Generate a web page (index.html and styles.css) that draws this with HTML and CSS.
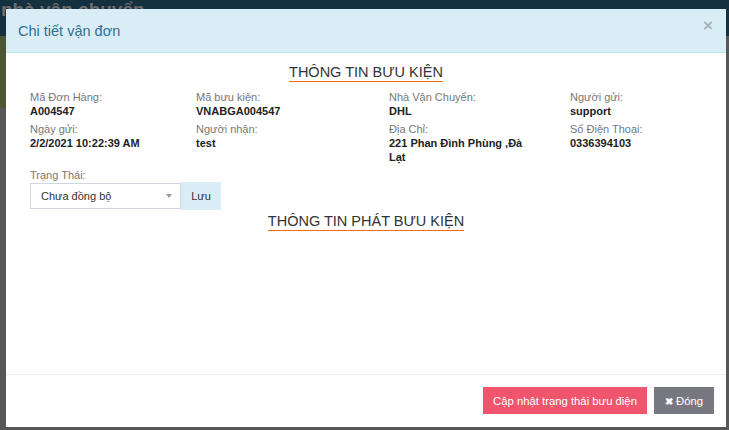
FILE: index.html
```html
<!DOCTYPE html>
<html lang="vi">
<head>
    <meta charset="UTF-8">
    <meta name="viewport" content="width=device-width, initial-scale=1.0">
    <title>Chi tiết vận đơn</title>
    <link rel="stylesheet" href="styles.css">
</head>
<body>

    <div class="page">
        <div class="topbar"><span class="page-title">nhà vận chuyển</span></div>
        <div class="page-body">
            <div class="side-block"></div>
        </div>
    </div>

    <div class="backdrop">
        <div class="dialog">
            <div class="dialog-header">
                <h4 class="dialog-title">Chi tiết vận đơn</h4>
                <button class="close">&times;</button>
            </div>

            <div class="dialog-body">
                <div class="section-head"><span>THÔNG TIN BƯU KIỆN</span></div>

                <div class="info-grid">
                    <div class="item">
                        <div class="label">Mã Đơn Hàng:</div>
                        <div class="value">A004547</div>
                    </div>
                    <div class="item">
                        <div class="label">Mã bưu kiện:</div>
                        <div class="value">VNABGA004547</div>
                    </div>
                    <div class="item">
                        <div class="label">Nhà Vận Chuyển:</div>
                        <div class="value">DHL</div>
                    </div>
                    <div class="item">
                        <div class="label">Người gửi:</div>
                        <div class="value">support</div>
                    </div>
                    <div class="item">
                        <div class="label">Ngày gửi:</div>
                        <div class="value">2/2/2021 10:22:39 AM</div>
                    </div>
                    <div class="item">
                        <div class="label">Người nhận:</div>
                        <div class="value">test</div>
                    </div>
                    <div class="item">
                        <div class="label">Địa Chỉ:</div>
                        <div class="value address">221 Phan Đình Phùng ,Đà Lạt</div>
                    </div>
                    <div class="item">
                        <div class="label">Số Điện Thoại:</div>
                        <div class="value">0336394103</div>
                    </div>
                </div>

                <div class="status">
                    <div class="label">Trạng Thái:</div>
                    <div class="status-row">
                        <div class="select">
                            <span>Chưa đồng bộ</span>
                            <span class="caret"></span>
                        </div>
                        <button class="save-button">Lưu</button>
                    </div>
                </div>

                <div class="section-head second"><span>THÔNG TIN PHÁT BƯU KIỆN</span></div>
            </div>

            <div class="dialog-footer">
                <button class="btn btn-update">Cập nhật trạng thái bưu điện</button>
                <button class="btn btn-close"><span class="x-icon">&#10006;</span> Đóng</button>
            </div>
        </div>
    </div>

</body>
</html>
```

FILE: styles.css
```css
body {
    margin: 0;
    font-family: "Liberation Sans", Arial, sans-serif;
    background-color: #575757;
    height: 430px;
    overflow: hidden;
}

.page {
    height: 430px;
}

.topbar {
    height: 36px;
    background-color: #15303f;
    overflow: hidden;
}

.page-title {
    display: block;
    padding-left: 1px;
    margin-top: -1px;
    font-size: 19px;
    line-height: 22px;
    font-weight: bold;
    color: #6d6d6d;
}

.page-body {
    height: 394px;
    background-color: #575757;
}

.side-block {
    width: 20px;
    height: 72px;
    background-color: #4c5634;
}

.backdrop {
    position: fixed;
    top: 0;
    left: 0;
    right: 0;
    bottom: 0;
    padding: 9px 3px 0 6px;
}

.dialog {
    background-color: #fff;
    width: 720px;
}

.dialog-header {
    display: flex;
    justify-content: space-between;
    align-items: flex-start;
    height: 43px;
    background-color: #d9edf7;
    border-bottom: 1px solid #bce8f1;
}

.dialog-title {
    margin: 0;
    padding: 13px 0 0 12px;
    font-size: 14.5px;
    font-weight: normal;
    color: #31708f;
    line-height: 18px;
}

.close {
    margin: 8px 13px 0 0;
    padding: 0;
    border: none;
    background: none;
    font-family: "Liberation Sans", Arial, sans-serif;
    font-size: 17px;
    font-weight: bold;
    line-height: 17px;
    color: #a8b4bb;
}

.dialog-body {
    height: 311px;
    padding: 10px 0 0 24px;
    border-bottom: 1px solid #eee;
}

.section-head {
    text-align: center;
    padding-right: 24px;
}

.section-head span {
    display: inline-block;
    font-size: 14.5px;
    line-height: 17px;
    color: #333;
    border-bottom: 1px solid #f26a10;
}

.section-head.second {
    margin-top: 2px;
}

.info-grid {
    display: grid;
    grid-template-columns: 166px 193px 181px 1fr;
    margin-top: 9px;
}

.item {
    margin-bottom: 5px;
}

.label {
    font-size: 11px;
    line-height: 13px;
    color: #777;
}

.value {
    font-size: 11px;
    line-height: 14px;
    font-weight: bold;
    color: #222;
}

.address {
    max-width: 136px;
}

.status-row {
    display: flex;
    margin-top: 1px;
}

.select {
    display: flex;
    justify-content: space-between;
    align-items: center;
    box-sizing: border-box;
    width: 151px;
    height: 26px;
    padding: 0 8px 0 10px;
    border: 1px solid #d2d6de;
    font-size: 11px;
    color: #333;
}

.caret {
    width: 0;
    height: 0;
    border-left: 3px solid transparent;
    border-right: 3px solid transparent;
    border-top: 4px solid #999;
}

.save-button {
    width: 40px;
    height: 28px;
    margin-top: -1px;
    border: none;
    background-color: #d9edf7;
    font-family: "Liberation Sans", Arial, sans-serif;
    font-size: 11px;
    color: #333;
}

.dialog-footer {
    display: flex;
    justify-content: flex-end;
    gap: 7px;
    padding: 12px 12px 13px 0;
}

.btn {
    height: 27px;
    padding: 0;
    border: none;
    font-family: "Liberation Sans", Arial, sans-serif;
    font-size: 11.3px;
    white-space: nowrap;
    color: #fff;
}

.btn-update {
    width: 164px;
    background-color: #f0556d;
}

.btn-close {
    width: 60px;
    background-color: #77777f;
}

.x-icon {
    font-size: 10px;
    font-weight: bold;
}
```
